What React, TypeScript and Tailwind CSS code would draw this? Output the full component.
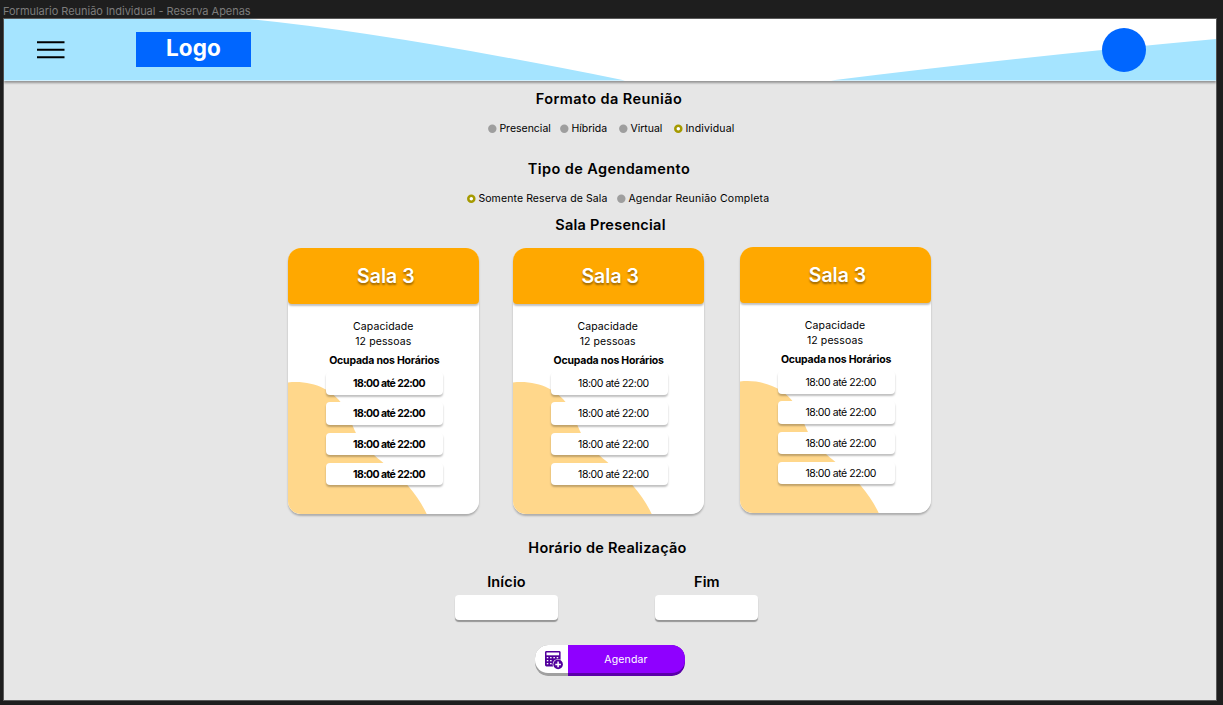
import React from "react";

function Heading({ children, className = "" }: { children: React.ReactNode; className?: string }) {
  return (
    <h2 className={`h-5 whitespace-nowrap text-center font-['Inter'] text-[14.5px] font-semibold leading-5 text-black ${className}`}>
      {children}
    </h2>
  );
}

function Radio({ label, checked = false, className = "" }: { label: string; checked?: boolean; className?: string }) {
  return (
    <label className={`flex h-4 items-center whitespace-nowrap font-['Inter'] text-[10.5px] leading-4 text-black ${className}`}>
      <svg className="mr-[2.4px] shrink-0" width="9" height="10" viewBox="0 0 9 10" fill="none">
        {checked ? (
          <circle cx="4.3" cy="4.8" r="3" fill="#fff" stroke="#a59a00" strokeWidth="2.5" />
        ) : (
          <circle cx="4.3" cy="4.8" r="4.2" fill="#9e9e9e" />
        )}
      </svg>
      {label}
    </label>
  );
}

const SLOTS = ["18:00 até 22:00", "18:00 até 22:00", "18:00 até 22:00", "18:00 até 22:00"];

function RoomCard({ bold = false, className = "" }: { bold?: boolean; className?: string }) {
  return (
    <article className={`relative h-[266px] w-[191px] shrink-0 overflow-hidden rounded-[13px] bg-white ${className}`}>
      <svg className="absolute inset-0" width="191" height="266" viewBox="0 0 191 266" fill="none">
        <path
          d="M0 134.5C25 132 44 142 54 156C63 169 64 180 71 190C82 208 102 217 120 237.7C128 247 134 256 138.7 266H0Z"
          fill="#ffd78b"
        />
      </svg>
      <div className="relative flex flex-col">
        <header className="flex h-14 items-center justify-center rounded-b-[4px] bg-[#ffa800] pl-[4px] pt-px shadow-[0_2px_2px_rgba(0,0,0,0.25)]">
          <h3 className="font-['Inter'] text-[19.5px] font-semibold leading-6 text-white [text-shadow:0_2px_2px_rgba(0,0,0,0.4)]">
            Sala 3
          </h3>
        </header>
        <div className="mt-[15px] pr-px text-center font-['Inter'] text-[10.5px] leading-[15.5px] tracking-[0.1px] text-black">
          <p>Capacidade</p>
          <p>12 pessoas</p>
        </div>
        <p className="mt-[3px] whitespace-nowrap pl-px text-center font-['Inter'] text-[10.5px] font-bold leading-4 tracking-[-0.2px] text-black">
          Ocupada nos Horários
        </p>
        <ul className="ml-[38px] mt-[3.5px] flex w-[117px] flex-col gap-[7.8px]">
          {SLOTS.map((slot, i) => (
            <li
              key={i}
              className={`flex h-[22.5px] items-center justify-center whitespace-nowrap rounded-[4px] bg-white pl-[8.5px] pt-[1.5px] font-['Inter'] text-[10.5px] text-black shadow-[0_2px_2px_rgba(0,0,0,0.25)] ${
                bold ? "font-bold tracking-[-0.6px]" : "tracking-[-0.45px]"
              }`}
            >
              {slot}
            </li>
          ))}
        </ul>
      </div>
    </article>
  );
}

function TimeField({ label }: { label: string }) {
  return (
    <div className="flex w-[103px] flex-col gap-[3px]">
      <Heading className="tracking-[0.15px]">{label}</Heading>
      <input
        aria-label={label}
        className="h-[25px] w-full rounded-[4px] bg-white shadow-[0_2px_1px_rgba(0,0,0,0.35)] outline-none"
      />
    </div>
  );
}

function CalendarPlusIcon() {
  return (
    <svg width="20" height="20" viewBox="0 0 20 20" fill="none">
      <rect x="1" y="1" width="15.6" height="15.4" rx="1.4" fill="#52009c" />
      <rect x="2.5" y="2.5" width="12.6" height="2.8" fill="#fff" />
      <g fill="#fff">
        <rect x="2.8" y="7" width="1.5" height="1.3" />
        <rect x="6.1" y="7" width="1.5" height="1.3" />
        <rect x="9.4" y="7" width="1.5" height="1.3" />
        <rect x="12.7" y="7" width="1.5" height="1.3" />
        <rect x="2.8" y="10" width="1.5" height="1.3" />
        <rect x="6.1" y="10" width="1.5" height="1.3" />
        <rect x="2.8" y="13" width="1.5" height="1.3" />
        <rect x="6.1" y="13" width="1.5" height="1.3" />
      </g>
      <circle cx="14.1" cy="14.4" r="5.5" fill="#fff" />
      <circle cx="14.1" cy="14.4" r="4.8" fill="#52009c" />
      <path d="M14.1 11.6v5.6M11.3 14.4h5.6" stroke="#fff" strokeWidth="1.5" />
    </svg>
  );
}

export default function App() {
  return (
    <div className="flex h-[705px] w-[1223px] flex-col overflow-hidden bg-[#1e1e1e] font-['Inter']">
      <div className="h-[18px] shrink-0 whitespace-nowrap pl-[3px] pt-[3px] text-[11px] leading-4 tracking-[-0.03px] text-[#7c7c7c]">
        Formulario Reunião Individual - Reserva Apenas
      </div>
      <main className="ml-[3px] flex h-[683px] w-[1214px] flex-col border border-[#5a5a5a] bg-[#e6e6e6]">
        <header className="relative h-[61.5px] shrink-0 bg-white shadow-[0_2px_2px_rgba(0,0,0,0.35)]">
          <svg className="absolute inset-0" width="1212" height="61.5" viewBox="0 0 1212 61.5" fill="none">
            <path d="M0 0H244Q386 14 621 61.5H0Z" fill="#a5e4ff" />
            <path d="M827 61.5Q1006 39 1212 20V61.5Z" fill="#a5e4ff" />
          </svg>
          <div className="relative flex h-full items-center">
            <svg className="ml-[33px]" width="28" height="18" viewBox="0 0 28 18" fill="none">
              <path d="M0 1.2H27.5M0 8.7H27.5M0 16.2H27.5" stroke="#000" strokeWidth="2" />
            </svg>
            <div className="ml-[71px] flex h-[35px] w-[115px] items-center justify-center bg-[#0066ff] pb-[3px] text-[22.5px] font-bold leading-none tracking-[0.15px] text-white">
              Logo
            </div>
            <div className="ml-auto mr-[70px] size-[44.5px] rounded-full bg-[#0066ff]" />
          </div>
        </header>

        <Heading className="mr-[2px] mt-[8.5px] tracking-[0.4px]">Formato da Reunião</Heading>
        <div className="ml-[484px] mt-[12px] flex">
          <Radio label="Presencial" className="w-[72px]" />
          <Radio label="Híbrida" className="w-[59px]" />
          <Radio label="Virtual" className="w-[55px]" />
          <Radio label="Individual" checked className="tracking-[0.15px]" />
        </div>
        <Heading className="mr-[2px] mt-[22px] tracking-[0.4px]">Tipo de Agendamento</Heading>
        <div className="ml-[463px] mt-[12px] flex">
          <Radio label="Somente Reserva de Sala" checked className="w-[150px] tracking-[0.1px]" />
          <Radio label="Agendar Reunião Completa" className="tracking-[0.22px]" />
        </div>
        <Heading className="mt-[8px] pl-px tracking-[0.25px]">Sala Presencial</Heading>

        <section className="ml-[284.3px] mt-[12.5px] flex items-start">
          <div className="rounded-[13px] shadow-[0_2px_2px_rgba(0,0,0,0.25)]">
            <RoomCard bold />
          </div>
          <div className="ml-[33.4px] rounded-[13px] shadow-[0_2px_2px_rgba(0,0,0,0.25)]">
            <RoomCard />
          </div>
          <div className="-mt-px ml-[36.3px] rounded-[13px] shadow-[0_2px_2px_rgba(0,0,0,0.25)]">
            <RoomCard />
          </div>
        </section>

        <Heading className="mr-[5px] mt-[24px] tracking-[0.24px]">Horário de Realização</Heading>
        <section className="ml-[451px] mt-[14px] flex gap-[97.4px]">
          <TimeField label="Início" />
          <TimeField label="Fim" />
        </section>

        <button className="ml-[531px] mt-[25.5px] flex h-[31px] w-[150px] shrink-0 overflow-hidden rounded-[13px]">
          <span className="flex h-full w-[33px] shrink-0 items-start justify-end rounded-l-[13px] bg-[#a0a0a0]">
            <span className="flex h-7 w-full items-center justify-center rounded-l-[13px] bg-white pl-[4px] pt-[2px]">
              <CalendarPlusIcon />
            </span>
          </span>
          <span className="h-full flex-1 rounded-r-[13px] bg-[#5a00a8]">
            <span className="flex h-7 items-center justify-center rounded-r-[13px] bg-[#8f00ff] pr-px pt-[2px] text-[10.5px] font-normal tracking-[0.15px] text-white">
              Agendar
            </span>
          </span>
        </button>
      </main>
    </div>
  );
}
